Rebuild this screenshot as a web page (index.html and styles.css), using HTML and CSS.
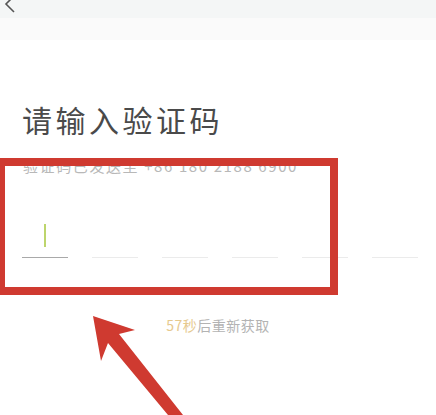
FILE: index.html
```html
<!DOCTYPE html>
<html lang="zh-CN">
<head>
<meta charset="utf-8">
<link rel="stylesheet" href="styles.css">
</head>
<body>
<div class="page">
  <div class="navbar">
    <svg class="back" width="20" height="16" viewBox="0 0 20 16"><path d="M14 -4 L6 4 L14 12" fill="none" stroke="#555" stroke-width="1.6"/></svg>
  </div>
  <div class="navstrip"></div>
  <main class="content">
    <h1 class="title">请输入验证码</h1>
    <p class="sub">验证码已发送至 +86 180 2188 6900</p>
    <div class="code">
      <div class="cell active"><span class="cursor"></span></div>
      <div class="cell"></div>
      <div class="cell"></div>
      <div class="cell"></div>
      <div class="cell"></div>
      <div class="cell"></div>
    </div>
    <p class="countdown"><span class="sec">57秒</span>后重新获取</p>
  </main>
  <div class="mark-box"></div>
  <svg class="mark-arrow" width="436" height="415" viewBox="0 0 436 415">
    <polygon points="93,316 135,330 119,334 183,415 168,415 108,343 101,361" fill="#cf3a30"/>
  </svg>
</div>
</body>
</html>
```
FILE: styles.css
```css
html, body {
  margin: 0;
  padding: 0;
  background: #ffffff;
}
.page {
  position: relative;
  width: 436px;
  height: 415px;
  overflow: hidden;
  font-family: "Noto Sans CJK SC", "Noto Sans", sans-serif;
}
.navbar {
  height: 18px;
  background: #f4f6f6;
  position: relative;
}
.back {
  position: absolute;
  left: 0;
  top: 0;
}
.navstrip {
  height: 22px;
  background: #fafafa;
}
.content {
  padding: 0 0 0 23px;
}
.title {
  margin: 61px 0 0 -1px;
  font-size: 30px;
  line-height: 36px;
  font-weight: 400;
  letter-spacing: 3.5px;
  color: #4a4a4a;
}
.sub {
  margin: 20px 0 0 0;
  font-size: 15px;
  line-height: 18px;
  letter-spacing: 1.6px;
  color: #b8b8b8;
}
.code {
  display: flex;
  gap: 24px;
  margin: 0 0 0 -1px;
  padding-top: 62px;
}
.cell {
  width: 46px;
  height: 20px;
  border-bottom: 1px solid #ebebeb;
  position: relative;
}
.cell.active {
  border-bottom-color: #a9a9a9;
}
.cursor {
  position: absolute;
  left: 22px;
  top: -13px;
  width: 2px;
  height: 23px;
  background: #bdd56c;
}
.countdown {
  margin: 58px 0 0 -23px;
  text-align: center;
  font-size: 14px;
  line-height: 18px;
  letter-spacing: 0.5px;
  color: #b3b3b3;
}
.sec {
  color: #e6c98e;
}
.mark-box {
  position: absolute;
  left: -3px;
  top: 158px;
  width: 325px;
  height: 121px;
  border: 8px solid #cf3a30;
}
.mark-arrow {
  position: absolute;
  left: 0;
  top: 0;
}
```
